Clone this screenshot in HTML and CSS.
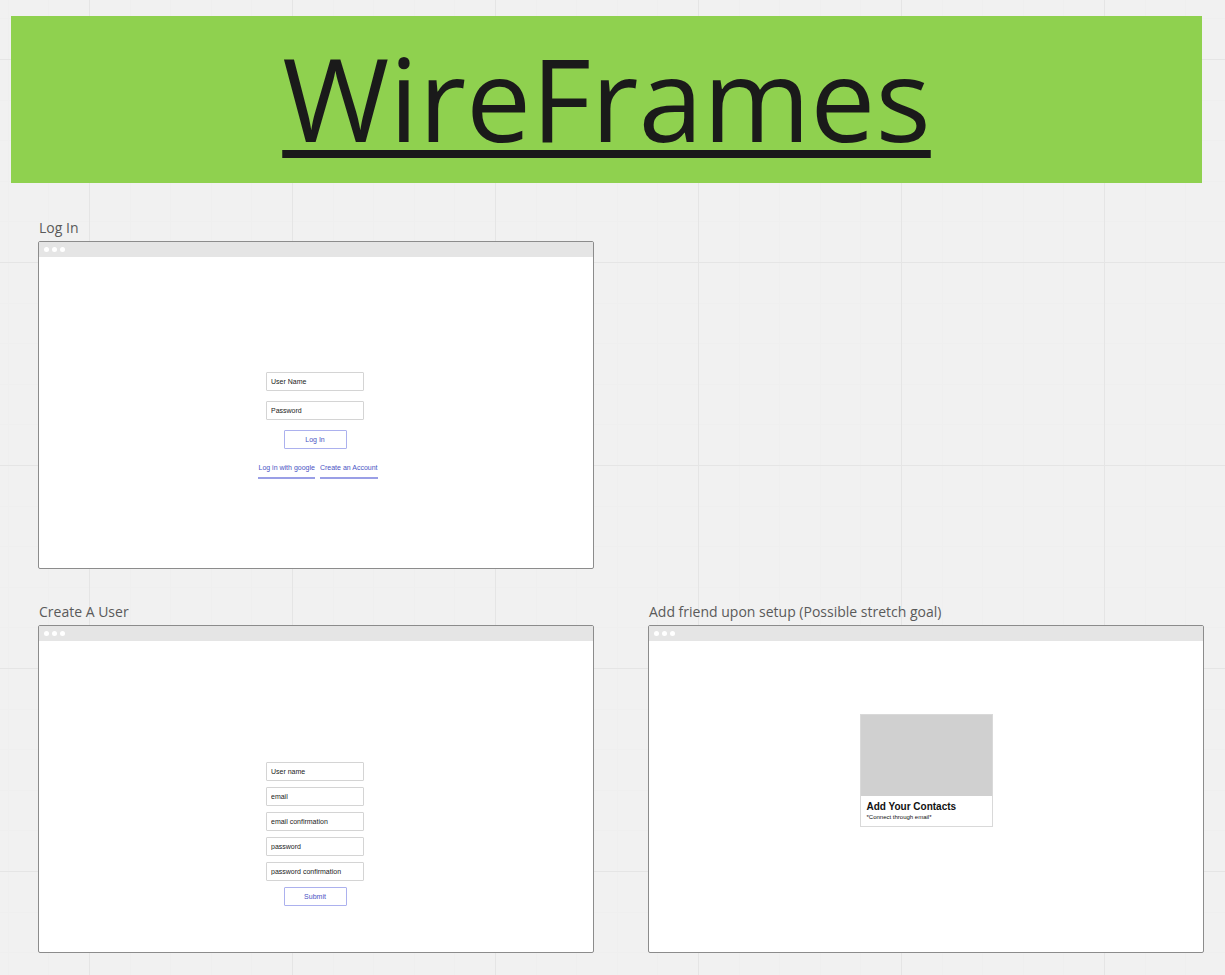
FILE: index.html
```html
<!DOCTYPE html>
<html lang="en">
<head>
<meta charset="utf-8">
<title>WireFrames</title>
<link rel="stylesheet" href="styles.css">
</head>
<body class="board">
<header class="banner"><h1 class="banner-title">WireFrames</h1></header>
<main class="frames">
  <section class="frame frame-first">
    <h2 class="frame-label">Log In</h2>
    <div class="window">
      <div class="window-bar"><i class="dot"></i><i class="dot"></i><i class="dot"></i></div>
      <form class="form form-login">
        <input class="field" type="text" placeholder="User Name" aria-label="User Name">
        <input class="field" type="password" placeholder="Password" aria-label="Password">
        <button class="button" type="button">Log In</button>
        <nav class="links">
          <a class="link" href="#">Log in with google</a>
          <a class="link" href="#">Create an Account</a>
        </nav>
      </form>
    </div>
  </section>
  <section class="frame">
    <h2 class="frame-label">Create A User</h2>
    <div class="window">
      <div class="window-bar"><i class="dot"></i><i class="dot"></i><i class="dot"></i></div>
      <form class="form form-signup">
        <input class="field" type="text" placeholder="User name" aria-label="User name">
        <input class="field" type="email" placeholder="email" aria-label="email">
        <input class="field" type="email" placeholder="email confirmation" aria-label="email confirmation">
        <input class="field" type="password" placeholder="password" aria-label="password">
        <input class="field" type="password" placeholder="password confirmation" aria-label="password confirmation">
        <button class="button" type="button">Submit</button>
      </form>
    </div>
  </section>
  <section class="frame">
    <h2 class="frame-label">Add friend upon setup (Possible stretch goal)</h2>
    <div class="window">
      <div class="window-bar"><i class="dot"></i><i class="dot"></i><i class="dot"></i></div>
      <article class="card">
        <div class="card-image"></div>
        <div class="card-text">
          <h3 class="card-title">Add Your Contacts</h3>
          <p class="card-note">*Connect through email*</p>
        </div>
      </article>
    </div>
  </section>
</main>
</body>
</html>
```
FILE: styles.css
```css
* { box-sizing: border-box; }

.board {
  --minor: #efefef;
  --major: #e5e5e5;
  margin: 0;
  padding: 16px 21px 21px 11px;
  min-height: 100vh;
  background-color: #f1f1f1;
  background-image:
    linear-gradient(90deg, var(--major) 1px, transparent 1px),
    linear-gradient(var(--major) 1px, transparent 1px),
    linear-gradient(90deg, transparent 41px, var(--minor) 41px 42px, transparent 42px 81px, var(--minor) 81px 82px, transparent 82px 122px, var(--minor) 122px 123px, transparent 123px 162px, var(--minor) 162px 163px, transparent 163px),
    linear-gradient(transparent 41px, var(--minor) 41px 42px, transparent 42px 81px, var(--minor) 81px 82px, transparent 82px 122px, var(--minor) 122px 123px, transparent 123px 162px, var(--minor) 162px 163px, transparent 163px);
  background-size: 203px 203px;
  background-position: 89px 59px;
  font-family: "Open Sans", "Noto Sans", sans-serif;
}

.banner {
  display: flex;
  justify-content: center;
  align-items: flex-start;
  height: 167px;
  margin-right: 2px;
  background: #8fd14f;
}

.banner-title {
  margin: 0;
  color: #1a1a1a;
  font-size: 116px;
  font-weight: 400;
  line-height: 162px;
  text-decoration: underline;
  text-decoration-thickness: 8px;
  text-underline-offset: 8px;
  text-decoration-skip-ink: none;
}

.frames {
  display: grid;
  grid-template-columns: 1fr 1fr;
  gap: 32px 54px;
  margin: 34px 0 0 27px;
}

.frame-first { grid-column: 1 / -1; width: calc(50% - 27px); }

.frame-label {
  margin: 0 0 2px;
  padding-left: 1px;
  color: #5a5a5a;
  font-size: 14px;
  font-weight: 400;
  line-height: 22px;
}

.window {
  aspect-ratio: 556 / 328;
  border: 1px solid #8c8c8c;
  border-radius: 2px;
  background: #fff;
  font-family: "Liberation Sans", Arial, sans-serif;
  overflow: hidden;
}

.window-bar {
  display: flex;
  align-items: center;
  gap: 3px;
  height: 15px;
  padding-left: 5px;
  background: #e5e5e5;
}

.dot {
  width: 5px;
  height: 5px;
  border-radius: 50%;
  background: #fff;
}

.form {
  display: flex;
  flex-direction: column;
  align-items: center;
  padding-right: 2px;
}

.form-login { gap: 10px; padding-top: 115px; }
.form-signup { gap: 6px; padding-top: 121px; }

.field {
  width: 98px;
  height: 19px;
  padding: 0 4px;
  border: 1px solid #d4d4d4;
  border-radius: 1px;
  background: #fff;
  color: #222;
  font: 7px "Liberation Sans", Arial, sans-serif;
}

.field::placeholder { color: #222; opacity: 1; }

.button {
  width: 63px;
  height: 19px;
  padding: 0;
  border: 1px solid #acb1ee;
  border-radius: 1px;
  background: #fff;
  color: #4a54c4;
  font: 7px "Liberation Sans", Arial, sans-serif;
}

.links {
  display: flex;
  gap: 5px;
  padding-left: 6px;
}

.link {
  padding: 3px 0;
  border-bottom: 2px solid #9a9fe6;
  color: #4a54c4;
  font-size: 7px;
  line-height: 12px;
  text-decoration: none;
}

.card {
  width: 133px;
  margin: 73px auto 0;
  border: 1px solid #d9d9d9;
}

.card-image { height: 81px; background: #d0d0d0; }

.card-text { padding: 5px 6px; color: #111; }

.card-title {
  margin: 0;
  font-size: 10px;
  line-height: 12px;
}

.card-note {
  margin: 0;
  font-size: 6px;
  line-height: 8px;
}
```
